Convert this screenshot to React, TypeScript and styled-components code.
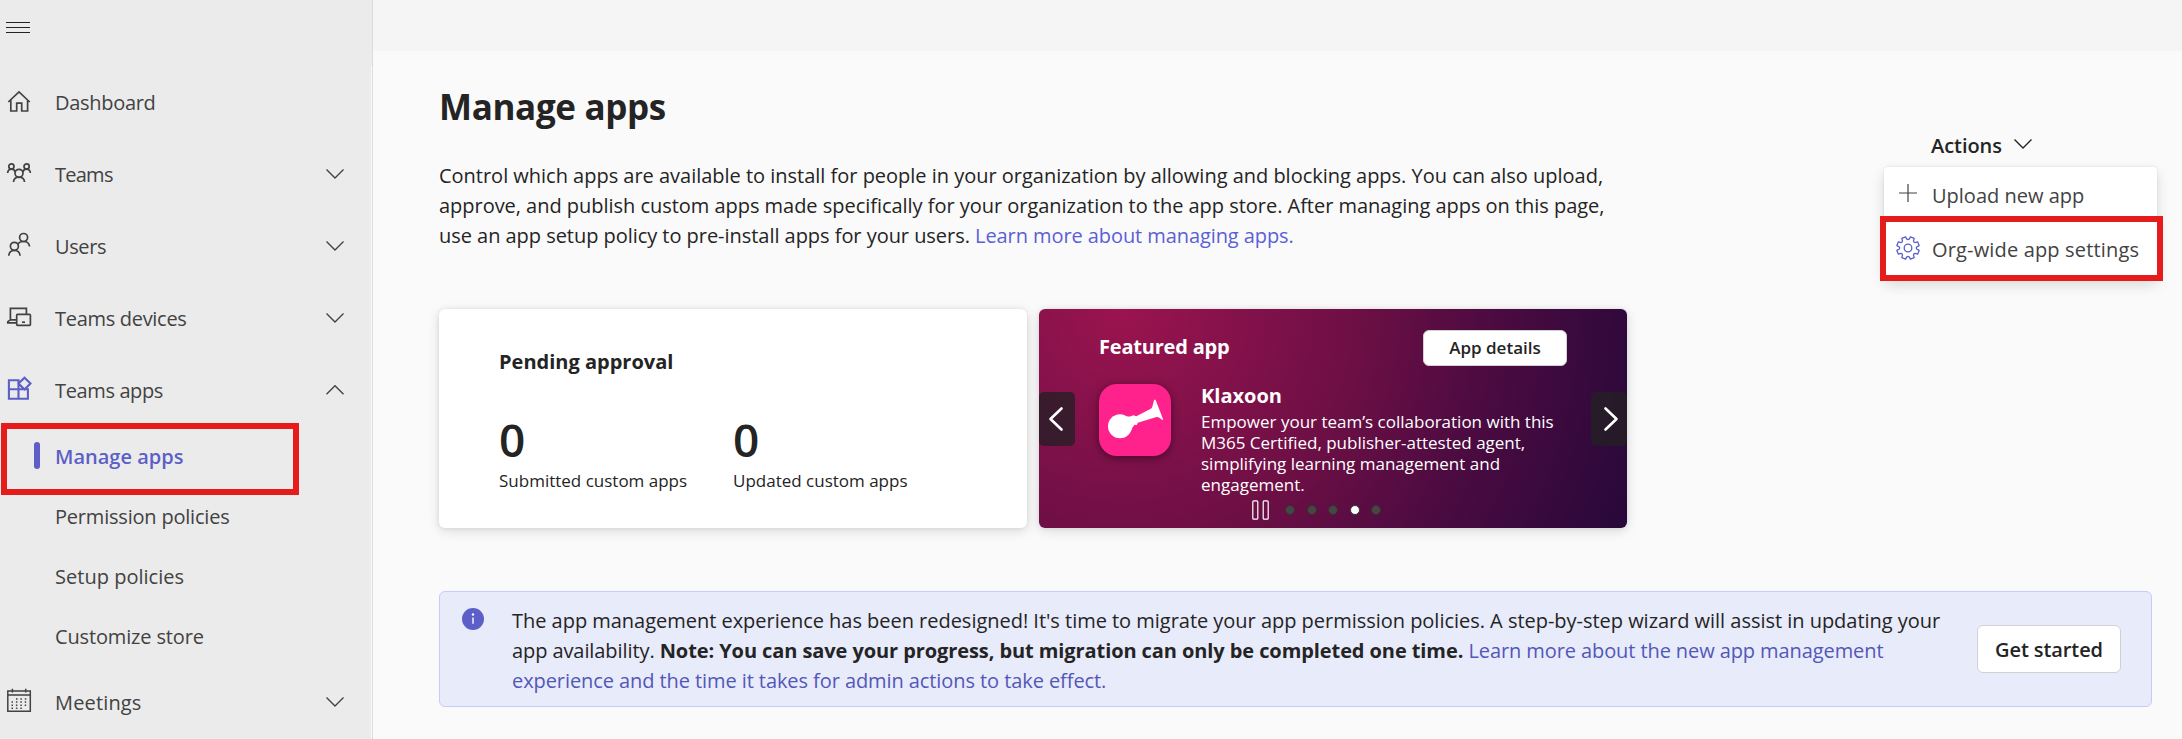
import React from "react";
import styled, { createGlobalStyle, css } from "styled-components";

const GlobalStyle = createGlobalStyle`
  *, *::before, *::after { box-sizing: border-box; }
  body {
    margin: 0;
    overflow: hidden;
    background: #fafafa;
    color: #242424;
    font-family: "Open Sans", "Noto Sans", sans-serif;
    font-size: 20px;
    line-height: 30px;
  }
  button { font: inherit; color: inherit; border: 0; background: none; padding: 0; }
  svg { display: block; overflow: visible; flex: none; }
`;

const Page = styled.div`
  display: flex;
  width: 2182px;
  height: 739px;
  overflow: hidden;
`;

/* ---------- Sidebar ---------- */

const Sidebar = styled.nav`
  display: flex;
  flex-direction: column;
  flex: none;
  width: 373px;
  background: #ebebeb;
  border-right: 1px solid #dcdcdc;
`;

const MenuToggle = styled.button`
  display: flex;
  height: 66px;
  padding: 22px 0 0 6px;
`;

const NavList = styled.div`
  box-shadow: inset -1px 0 #fafafa;
`;

const NavRow = styled.a`
  display: flex;
  align-items: center;
  flex: none;
  height: 72px;
  padding: 0 28px 0 7px;
  color: #424242;
`;

const NavIcon = styled.span<{ $active?: boolean }>`
  width: 24px;
  margin-right: 24px;
  color: ${(p) => (p.$active ? "#5b5fc7" : "#424242")};
`;

const NavLabel = styled.span<{ $spacing?: number }>`
  flex: 1;
  padding-top: 2px;
  white-space: nowrap;
  letter-spacing: ${(p) => p.$spacing ?? 0}px;
`;

const SubRow = styled.a<{ $selected?: boolean; $spacing?: number }>`
  position: relative;
  display: flex;
  align-items: center;
  flex: none;
  height: 60px;
  padding: 2px 0 0 55px;
  white-space: nowrap;
  color: #424242;
  letter-spacing: ${(p) => p.$spacing ?? 0}px;
  ${(p) =>
    p.$selected &&
    css`
      color: #5b5fc7;
      font-weight: 600;
      &::before {
        content: "";
        position: absolute;
        left: 34px;
        top: 16px;
        width: 6px;
        height: 27px;
        border-radius: 3px;
        background: #5b5fc7;
      }
    `}
`;

const Highlight = styled.span<{ $left: number; $top: number; $w: number; $h: number }>`
  position: absolute;
  left: ${(p) => p.$left}px;
  top: ${(p) => p.$top}px;
  width: ${(p) => p.$w}px;
  height: ${(p) => p.$h}px;
  border: 6px solid #e61c1c;
  pointer-events: none;
`;

/* ---------- Main area ---------- */

const Main = styled.main`
  flex: 1;
  min-width: 0;
`;

const TopStrip = styled.div`
  height: 51px;
  background: #f5f5f5;
`;

const Content = styled.div`
  width: 1779px;
  padding: 32px 0 0 66px;
`;

const PageHeader = styled.header`
  display: flex;
  justify-content: space-between;
  height: 167px;
`;

const Title = styled.h1`
  margin: 0 0 30px;
  font-size: 35px;
  line-height: 48px;
  font-weight: 700;
  letter-spacing: -0.35px;
`;

const Line = styled.div<{ $spacing?: number }>`
  white-space: nowrap;
  letter-spacing: ${(p) => p.$spacing ?? 0}px;
`;

const Link = styled.a<{ $dark?: boolean; $spacing?: number }>`
  color: ${(p) => (p.$dark ? "#5357b8" : "#5b5fd6")};
  letter-spacing: ${(p) => p.$spacing ?? 0}px;
`;

const Actions = styled.div`
  position: relative;
  width: 221px;
  margin-top: 46px;
`;

const ActionsButton = styled.button`
  display: flex;
  align-items: center;
  gap: 12px;
  height: 30px;
  font-weight: 600;
  letter-spacing: -0.05px;
`;

const Menu = styled.div`
  position: absolute;
  left: -47px;
  top: 38px;
  width: 273px;
  padding-bottom: 4px;
  border-radius: 4px;
  background: #fff;
  box-shadow: 0 6px 14px rgba(0, 0, 0, 0.13), 0 0 3px rgba(0, 0, 0, 0.1);
`;

const MenuItem = styled.a<{ $spacing?: number }>`
  position: relative;
  display: flex;
  align-items: center;
  gap: 12px;
  height: 54px;
  padding-left: 12px;
  white-space: nowrap;
  color: #424242;
  letter-spacing: ${(p) => p.$spacing ?? 0}px;
`;

const TextDrop = styled.span`
  padding-top: 3px;
`;

/* ---------- Cards ---------- */

const Cards = styled.section`
  display: flex;
  gap: 12px;
  margin-top: 59px;
`;

const Card = styled.article`
  width: 588px;
  height: 219px;
  border-radius: 6px;
  background: #fff;
  box-shadow: 0 3px 12px rgba(0, 0, 0, 0.13), 0 0 4px rgba(0, 0, 0, 0.08);
`;

const PendingCard = styled(Card)`
  padding: 38px 60px 0;
`;

const CardTitle = styled.h2<{ $h?: number; $spacing?: number }>`
  margin: 0;
  font-size: 20px;
  line-height: ${(p) => p.$h ?? 30}px;
  font-weight: 700;
  letter-spacing: ${(p) => p.$spacing ?? 0}px;
`;

const Stats = styled.div`
  display: flex;
  margin-top: 32px;
`;

const Stat = styled.div`
  width: 234px;
`;

const StatValue = styled.div`
  font-size: 46px;
  line-height: 60px;
  font-weight: 600;
`;

const StatLabel = styled.div`
  font-size: 17px;
  line-height: 24px;
  white-space: nowrap;
`;

const FeaturedCard = styled(Card)`
  position: relative;
  padding: 21px 60px 0;
  color: #fff;
  background: radial-gradient(circle at 14% 0, #9b144f 0, #82114a 130px, #6c0f45 240px, #4c0b41 370px, #27083a 550px);
`;

const FeaturedHeader = styled.div`
  display: flex;
  justify-content: space-between;
  height: 36px;
`;

const Button = styled.button<{ $small?: boolean }>`
  flex: none;
  width: 144px;
  height: ${(p) => (p.$small ? 36 : 48)}px;
  padding-top: ${(p) => (p.$small ? 0 : 2)}px;
  border: 1px solid #d1d1d1;
  border-radius: 6px;
  background: #fff;
  color: #242424;
  font-size: ${(p) => (p.$small ? 17 : 20)}px;
  line-height: ${(p) => (p.$small ? 34 : 44)}px;
  font-weight: 600;
  letter-spacing: ${(p) => (p.$small ? 0 : -0.1)}px;
`;

const FeaturedBody = styled.div`
  display: flex;
  gap: 30px;
  margin-top: 18px;
`;

const AppTile = styled.div`
  width: 72px;
  height: 72px;
  border-radius: 18px;
  background: #ff228c;
  box-shadow: 0 2px 8px rgba(0, 0, 0, 0.45);
`;

const AppText = styled.div`
  font-size: 17px;
  line-height: 21px;
  white-space: nowrap;
`;

const AppName = styled(CardTitle)`
  margin-bottom: 4px;
`;

const Pager = styled.div`
  position: absolute;
  left: 213px;
  bottom: 8px;
  display: flex;
  align-items: center;
  height: 20px;
`;

const Dot = styled.span<{ $on?: boolean }>`
  width: 10px;
  height: 10px;
  margin-right: 11.5px;
  border: 1px solid #333;
  border-radius: 50%;
  background: ${(p) => (p.$on ? "#fff" : "#484644")};
`;

const Dots = styled.div`
  display: flex;
  margin-left: 16px;
`;

const Arrow = styled.button<{ $side: "left" | "right" }>`
  position: absolute;
  top: 83px;
  ${(p) => p.$side}: 0;
  display: flex;
  align-items: center;
  justify-content: center;
  width: 36px;
  height: 54px;
  padding-left: ${(p) => (p.$side === "right" ? 3 : 0)}px;
  padding-right: ${(p) => (p.$side === "left" ? 3 : 0)}px;
  border-radius: 5px;
  background: rgba(36, 31, 36, 0.78);
  color: #fff;
`;

/* ---------- Banner ---------- */

const Banner = styled.section`
  display: flex;
  height: 116px;
  margin-top: 63px;
  padding: 14px 30px 0 22px;
  border: 1px solid #c5cbfa;
  border-radius: 6px;
  background: #e8ebfa;
`;

const InfoIcon = styled.span`
  padding-top: 2px;
  margin-right: 28px;
`;

const BannerText = styled.div`
  flex: 1;
  min-width: 0;
`;

const BannerAction = styled.div`
  padding-top: 19px;
`;

/* ---------- Icons ---------- */

const Stroke = ({ w = 24, h = 24, sw = 1.5, children }: { w?: number; h?: number; sw?: number; children: React.ReactNode }) => (
  <svg width={w} height={h} viewBox={`0 0 ${w} ${h}`} fill="none" stroke="currentColor" strokeWidth={sw}>
    {children}
  </svg>
);

const Chevron = ({ up }: { up?: boolean }) => (
  <Stroke w={18} h={10} sw={1.4}>
    <path d={up ? "M.5 9.3 9 .8l8.500 8.500" : "M.5.5 9 9 17.500.5"} />
  </Stroke>
);

const HomeIcon = () => (
  <Stroke sw={1.7}>
    <path d="M1.300 12 12 1.800 22.700 12M3.800 9.800V21h5.900v-7.800h5V21h5.900V9.800" />
  </Stroke>
);

const TeamsIcon = () => (
  <Stroke sw={1.7}>
    <circle cx="12" cy="11.300" r="4" />
    <path d="M6.500 20c.2-3 2.600-4.800 5.500-4.800s5.300 1.800 5.500 4.800" />
    <circle cx="4.400" cy="4.500" r="2.600" />
    <circle cx="19.600" cy="4.500" r="2.600" />
    <path d="M.6 11C.8 8.600 2.400 7.100 4.400 7.100S7.600 8 8.200 9.900M23.400 11c-.2-2.400-1.800-3.900-3.800-3.900S16.400 8 15.800 9.900" />
  </Stroke>
);

const UsersIcon = () => (
  <Stroke sw={1.7}>
    <circle cx="16.600" cy="3.500" r="4" />
    <circle cx="7.400" cy="12.300" r="4" />
    <path d="M1.800 21.700c.1-3.400 2.600-5.400 5.600-5.400s5.500 2 5.600 5.400M11 10.300c.8-1.900 2.900-2.800 5.500-2.800 3.200 0 5.700 1.500 6.100 5" />
  </Stroke>
);

const DevicesIcon = () => (
  <Stroke sw={1.7}>
    <path d="M19.400 8.300V2.400h-16v11.500h6.300M3.400 13.900.8 15.600v1.300h8.900" />
    <rect x="9.700" y="8.400" width="13.700" height="11" rx=".8" />
    <path d="M15 16.200h3" />
  </Stroke>
);

const AppsIcon = () => (
  <Stroke sw={2.1}>
    <path d="M11.500 11.200V2.200H1.900v18.500h19V11.200H1.900M11.500 11.200v9.500M11.500 5.600 17.500-.3l6 5.900-6 5.900z" />
  </Stroke>
);

const MeetingsIcon = () => (
  <Stroke>
    <path d="M.8.9h22.500v20.300H.8zM.8 5.100h22.500M5.400-1.200v3.600M18.700-1.200v3.600" />
    <path d="M9 8.900h12M4.500 12h16M4.500 15.200h16M4.500 18.300h12" strokeDasharray="1.500 2.900" />
  </Stroke>
);

const teeth = 8;
const gearPath =
  Array.from({ length: teeth }, (_, i) => {
    const at = (r: number, f: number) => {
      const a = ((i + f) / teeth) * Math.PI * 2 - Math.PI / 2;
      return `${(12 + r * Math.cos(a)).toFixed(2)} ${(12 + r * Math.sin(a)).toFixed(2)}`;
    };
    return `${i ? "L" : "M"}${at(9, -0.17)}Q${at(7.8, 0)} ${at(9, 0.17)}L${at(11.4, 0.27)}L${at(11.4, 0.73)}`;
  }).join("") + "Z";

const GearIcon = () => (
  <svg width="24" height="24" viewBox="0 0 24 24" fill="none" stroke="#5b5fc7" strokeWidth="1.300" strokeLinejoin="round">
    <path d={gearPath} />
    <circle cx="12" cy="12" r="3.800" />
  </svg>
);

const navTop = [
  { label: "Dashboard", icon: <HomeIcon />, spacing: -0.3, leaf: true },
  { label: "Teams", icon: <TeamsIcon />, spacing: -0.75 },
  { label: "Users", icon: <UsersIcon />, spacing: -0.4 },
  { label: "Teams devices", icon: <DevicesIcon />, spacing: -0.3 },
  { label: "Teams apps", icon: <AppsIcon />, spacing: -0.37, active: true, up: true },
];

export default function App() {
  return (
    <>
      <GlobalStyle />
      <Page>
        <Sidebar>
          <MenuToggle aria-label="Menu">
            <Stroke w={24} h={11} sw={1}>
              <path d="M0 .5h24M0 5.500h24M0 10.500h24" />
            </Stroke>
          </MenuToggle>
          <NavList>
            {navTop.map((n) => (
              <NavRow key={n.label}>
                <NavIcon $active={n.active}>{n.icon}</NavIcon>
                <NavLabel $spacing={n.spacing}>{n.label}</NavLabel>
                {!n.leaf && <Chevron up={n.up} />}
              </NavRow>
            ))}
            <SubRow $selected>
              Manage apps
              <Highlight $left={1} $top={-3} $w={298} $h={71.5} />
            </SubRow>
            <SubRow $spacing={-0.2}>Permission policies</SubRow>
            <SubRow $spacing={0.02}>Setup policies</SubRow>
            <SubRow $spacing={-0.15}>Customize store</SubRow>
            <NavRow>
              <NavIcon>
                <MeetingsIcon />
              </NavIcon>
              <NavLabel $spacing={0.15}>Meetings</NavLabel>
              <Chevron />
            </NavRow>
          </NavList>
        </Sidebar>

        <Main>
          <TopStrip />
          <Content>
            <PageHeader>
              <div>
                <Title>Manage apps</Title>
                <Line $spacing={-0.015}>
                  Control which apps are available to install for people in your organization by allowing and blocking apps. You can also upload,
                </Line>
                <Line $spacing={-0.03}>
                  approve, and publish custom apps made specifically for your organization to the app store. After managing apps on this page,
                </Line>
                <Line $spacing={-0.04}>
                  use an app setup policy to pre-install apps for your users. <Link $spacing={-0.08}>Learn more about managing apps.</Link>
                </Line>
              </div>
              <Actions>
                <ActionsButton>
                  <TextDrop>Actions</TextDrop>
                  <Chevron />
                </ActionsButton>
                <Menu>
                  <MenuItem>
                    <Stroke sw={1.2}>
                      <path d="M12 2v18M3 11h18" />
                    </Stroke>
                    <TextDrop>Upload new app</TextDrop>
                  </MenuItem>
                  <MenuItem $spacing={0.16}>
                    <GearIcon />
                    <TextDrop>Org-wide app settings</TextDrop>
                    <Highlight $left={-4} $top={-5} $w={282.5} $h={65} />
                  </MenuItem>
                </Menu>
              </Actions>
            </PageHeader>

            <Cards>
              <PendingCard>
                <CardTitle>Pending approval</CardTitle>
                <Stats>
                  <Stat>
                    <StatValue>0</StatValue>
                    <StatLabel>Submitted custom apps</StatLabel>
                  </Stat>
                  <Stat>
                    <StatValue>0</StatValue>
                    <StatLabel>Updated custom apps</StatLabel>
                  </Stat>
                </Stats>
              </PendingCard>
              <FeaturedCard>
                <FeaturedHeader>
                  <CardTitle $h={34} $spacing={-0.2}>
                    Featured app
                  </CardTitle>
                  <Button $small>App details</Button>
                </FeaturedHeader>
                <FeaturedBody>
                  <AppTile>
                    <svg width="72" height="72" viewBox="0 0 72 72" fill="#fff">
                      <circle cx="21" cy="42.300" r="12" />
                      <path d="M27 32.500 31.300 32.600 34.300 31.200l3 1.100L52.300 24.500c1.600-1.600 1.800-6 3-8.800h1.200L64 35c0 1-.8 1.200-1.500.6-1.600-1.800-3-2.700-5-2.500L38.700 38.700l-.8 2.200-2.200-.2c-2.200 1.600-2.700 4.300-4.200 6.200L20 52z" />
                    </svg>
                  </AppTile>
                  <AppText>
                    <AppName $h={23}>Klaxoon</AppName>
                    <div>Empower your team’s collaboration with this</div>
                    <div>M365 Certified, publisher-attested agent,</div>
                    <div>simplifying learning management and</div>
                    <div>engagement.</div>
                  </AppText>
                </FeaturedBody>
                <Pager>
                  <Stroke w={17} h={20} sw={1.2}>
                    <rect x=".8" y=".8" width="5" height="18.400" rx="1" />
                    <rect x="11.200" y=".8" width="5" height="18.400" rx="1" />
                  </Stroke>
                  <Dots>
                    {[0, 1, 2, 3, 4].map((i) => (
                      <Dot key={i} $on={i === 3} />
                    ))}
                  </Dots>
                </Pager>
                <Arrow $side="left" aria-label="Previous">
                  <svg width="14" height="24" viewBox="0 0 14 24" fill="none" stroke="#fff" strokeWidth="2.600" strokeLinecap="round" strokeLinejoin="round">
                    <path d="M12.500 1.500 1.500 12l11 10.500" />
                  </svg>
                </Arrow>
                <Arrow $side="right" aria-label="Next">
                  <svg width="14" height="24" viewBox="0 0 14 24" fill="none" stroke="#fff" strokeWidth="2.600" strokeLinecap="round" strokeLinejoin="round">
                    <path d="m1.500 1.500 11 10.500-11 10.500" />
                  </svg>
                </Arrow>
              </FeaturedCard>
            </Cards>

            <Banner>
              <InfoIcon>
                <svg width="22" height="22" viewBox="0 0 22 22">
                  <circle cx="11" cy="11" r="11" fill="#5b5fc7" />
                  <circle cx="11" cy="6.500" r="1.200" fill="#fff" />
                  <path d="M11 9.500v6.300" stroke="#fff" strokeWidth="1.400" />
                </svg>
              </InfoIcon>
              <BannerText>
                <Line $spacing={-0.025}>
                  The app management experience has been redesigned! It's time to migrate your app permission policies. A step-by-step wizard will assist in updating your
                </Line>
                <Line $spacing={-0.085}>
                  app availability. <b>Note: You can save your progress, but migration can only be completed one time.</b>{" "}
                  <Link $dark $spacing={-0.09}>
                    Learn more about the new app management
                  </Link>
                </Line>
                <Line>
                  <Link $dark $spacing={-0.08}>
                    experience and the time it takes for admin actions to take effect.
                  </Link>
                </Line>
              </BannerText>
              <BannerAction>
                <Button>Get started</Button>
              </BannerAction>
            </Banner>
          </Content>
        </Main>
      </Page>
    </>
  );
}
